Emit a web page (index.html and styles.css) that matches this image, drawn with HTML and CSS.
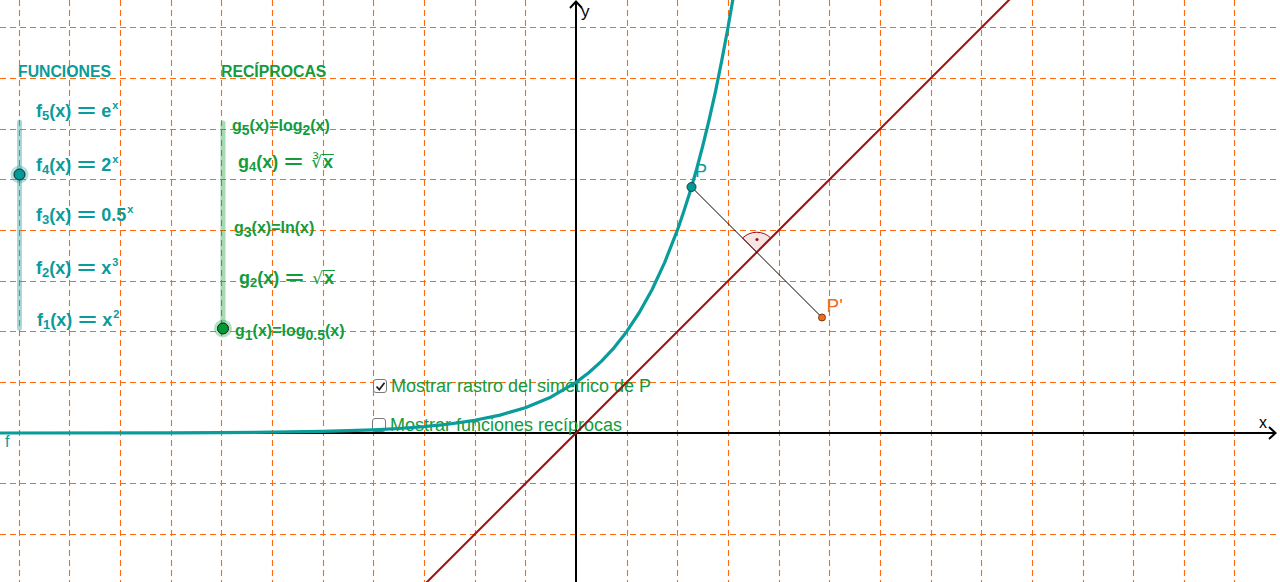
FILE: index.html
```html
<!DOCTYPE html>
<html lang="es">
<head>
<meta charset="utf-8">
<title>Funciones recíprocas</title>
<link rel="stylesheet" href="styles.css">
</head>
<body>
<div class="board">
  <svg class="layer grid" width="1280" height="582" viewBox="0 0 1280 582">
    <g class="gridlines">
      <line x1="19.5" y1="0" x2="19.5" y2="582"/>
      <line x1="69.5" y1="0" x2="69.5" y2="582"/>
      <line x1="120.5" y1="0" x2="120.5" y2="582"/>
      <line x1="171.5" y1="0" x2="171.5" y2="582"/>
      <line x1="221.5" y1="0" x2="221.5" y2="582"/>
      <line x1="272.5" y1="0" x2="272.5" y2="582"/>
      <line x1="323.5" y1="0" x2="323.5" y2="582"/>
      <line x1="373.5" y1="0" x2="373.5" y2="582"/>
      <line x1="424.5" y1="0" x2="424.5" y2="582"/>
      <line x1="475.5" y1="0" x2="475.5" y2="582"/>
      <line x1="525.5" y1="0" x2="525.5" y2="582"/>
      <line x1="627.5" y1="0" x2="627.5" y2="582"/>
      <line x1="677.5" y1="0" x2="677.5" y2="582"/>
      <line x1="728.5" y1="0" x2="728.5" y2="582"/>
      <line x1="779.5" y1="0" x2="779.5" y2="582"/>
      <line x1="829.5" y1="0" x2="829.5" y2="582"/>
      <line x1="880.5" y1="0" x2="880.5" y2="582"/>
      <line x1="931.5" y1="0" x2="931.5" y2="582"/>
      <line x1="981.5" y1="0" x2="981.5" y2="582"/>
      <line x1="1032.5" y1="0" x2="1032.5" y2="582"/>
      <line x1="1083.5" y1="0" x2="1083.5" y2="582"/>
      <line x1="1133.5" y1="0" x2="1133.5" y2="582"/>
      <line x1="1184.5" y1="0" x2="1184.5" y2="582"/>
      <line x1="1234.5" y1="0" x2="1234.5" y2="582"/>
      <line x1="0" y1="27.5" x2="1280" y2="27.5"/>
      <line x1="0" y1="78.5" x2="1280" y2="78.5"/>
      <line x1="0" y1="129.5" x2="1280" y2="129.5"/>
      <line x1="0" y1="179.5" x2="1280" y2="179.5"/>
      <line x1="0" y1="230.5" x2="1280" y2="230.5"/>
      <line x1="0" y1="281.5" x2="1280" y2="281.5"/>
      <line x1="0" y1="331.5" x2="1280" y2="331.5"/>
      <line x1="0" y1="382.5" x2="1280" y2="382.5"/>
      <line x1="0" y1="483.5" x2="1280" y2="483.5"/>
      <line x1="0" y1="534.5" x2="1280" y2="534.5"/>
    </g>
    <g class="axes">
      <line x1="0" y1="433" x2="1276" y2="433"/>
      <polyline points="1269,427 1275.5,433 1269,439"/>
      <line x1="576" y1="582" x2="576" y2="1.5"/>
      <polyline points="570,8 576,1.5 582,8"/>
    </g>
  </svg>

  <div class="lbl head teal h-fun">FUNCIONES</div>
  <div class="lbl head green h-rec">RECÍPROCAS</div>

  <div class="lbl fx teal f5">f<span class="sub">5</span>(x)<span class="eq">=</span>e<span class="sup">x</span></div>
  <div class="lbl fx teal f4">f<span class="sub">4</span>(x)<span class="eq">=</span>2<span class="sup">x</span></div>
  <div class="lbl fx teal f3">f<span class="sub">3</span>(x)<span class="eq">=</span>0.5<span class="sup">x</span></div>
  <div class="lbl fx teal f2">f<span class="sub">2</span>(x)<span class="eq">=</span>x<span class="sup">3</span></div>
  <div class="lbl fx teal f1">f<span class="sub">1</span>(x)<span class="eq">=</span>x<span class="sup">2</span></div>

  <div class="lbl gx green g5">g<span class="gsub">5</span>(x)=log<span class="gsub">2</span>(x)</div>
  <div class="lbl fx green g4">g<span class="sub">4</span>(x)<span class="eq">=</span><span class="root"><span class="rad">∛</span><span class="rc">x</span></span></div>
  <div class="lbl gx green g3">g<span class="gsub">3</span>(x)=ln(x)</div>
  <div class="lbl fx green g2">g<span class="sub">2</span>(x)<span class="eq">=</span><span class="root"><span class="rad">√</span><span class="rc">x</span></span></div>
  <div class="lbl gx green g1">g<span class="gsub">1</span>(x)=log<span class="gsub">0.5</span>(x)</div>

  <div class="lbl cb-row row1">
    <span class="box"><svg width="11" height="11" viewBox="0 0 11 11"><polyline points="1.5,5.5 4.3,8.5 9.5,1.8"/></svg></span>
    <span class="cb-text">Mostrar rastro del simétrico de P</span>
  </div>
  <div class="lbl cb-row row2">
    <span class="box"></span>
    <span class="cb-text">Mostrar funciones recíprocas</span>
  </div>

  <div class="lbl axis-lbl ylbl">y</div>
  <div class="lbl axis-lbl xlbl">x</div>
  <div class="lbl flbl teal">f</div>
  <div class="lbl plbl teal">P</div>
  <div class="lbl pplbl">P'</div>

  <svg class="layer plot" width="1280" height="582" viewBox="0 0 1280 582">
    <line class="slider-track teal-track" x1="19.5" y1="122" x2="19.5" y2="328"/>
    <circle class="halo teal-halo" cx="19.5" cy="174.5" r="9"/>
    <circle class="knob teal-knob" cx="19.5" cy="174.5" r="5.5"/>

    <line class="slider-track green-track" x1="223" y1="123" x2="223" y2="328"/>
    <circle class="halo green-halo" cx="223" cy="328.5" r="9"/>
    <circle class="knob green-knob" cx="223" cy="328.5" r="5.5"/>

    <line class="bisector" x1="416" y1="593" x2="1016" y2="-7"/>
    <polyline class="curve" points="0,433 170.8,432.8 221.45,432.6 272.1,432.2 322.75,431.4 373.4,429.8 398.7,428.5 424.05,426.7 449.4,424 474.7,420.3 500,415.1 525.35,407.7 550.7,397.2 576,382.35 588.7,372.8 601.3,361.4 614,347.8 626.65,331.7 639.3,312.5 652,289.75 664.6,262.6 677.3,230.4 683.6,212.1 690,192.1 696.3,170.3 702.6,146.5 708.95,120.5 715.3,92.3 721.6,61.4 727.95,27.8 733,-1.3 735.5,-16.6"/>
    <line class="seg" x1="691.5" y1="187" x2="822" y2="317.5"/>
    <path class="angle" d="M756.75,252.25 L742.6,238.1 A20,20 0 0 1 770.9,238.1 Z"/>
    <circle class="angle-dot" cx="757" cy="239.5" r="1.6"/>
    <circle class="pt-p" cx="691.5" cy="187" r="4.5"/>
    <circle class="pt-pp" cx="822" cy="317.5" r="3.5"/>
  </svg>
</div>
</body>
</html>
```

FILE: styles.css
```css
html, body {
  margin: 0;
  padding: 0;
  background: #ffffff;
}

.board {
  position: relative;
  width: 1280px;
  height: 582px;
  overflow: hidden;
  background: #ffffff;
  font-family: "Liberation Sans", Arial, sans-serif;
}

.layer {
  position: absolute;
  left: 0;
  top: 0;
  display: block;
}

.plot {
  pointer-events: none;
}

.gridlines line {
  stroke: #ff6a10;
  stroke-width: 1.1;
  stroke-dasharray: 6 4;
}

.axes line,
.axes polyline {
  stroke: #000000;
  stroke-width: 2;
  fill: none;
}

.teal { color: #0a9b9b; }
.green { color: #139b3c; }

.lbl {
  position: absolute;
  white-space: nowrap;
  line-height: 1;
}

.head {
  font-weight: bold;
  font-size: 15.8px;
  top: 64px;
}
.h-fun { left: 18px; }
.h-rec { left: 221px; }

/* math-style formulas */
.fx {
  font-weight: bold;
  font-size: 18px;
}
.sub {
  font-size: 13px;
  position: relative;
  top: 3px;
}
.sup {
  font-size: 11px;
  position: relative;
  top: -8px;
  margin-left: 1px;
}
.eq {
  display: inline-block;
  width: 21px;
  margin: 0 4px 0 5px;
  text-align: center;
  transform: scaleX(1.8);
}

.f5 { left: 36px; top: 101.5px; }
.f4 { left: 36px; top: 155.5px; }
.f3 { left: 36px; top: 205.5px; }
.f2 { left: 36px; top: 259px; }
.f1 { left: 37px; top: 310.5px; }

.g4 { left: 238px; top: 153px; }
.g2 { left: 239px; top: 269px; }

/* text-style formulas */
.gx {
  font-weight: bold;
  font-size: 16px;
}
.gsub {
  font-size: 14px;
  position: relative;
  top: 4px;
}
.g5 { left: 232px; top: 118px; }
.g3 { left: 234px; top: 219.5px; }
.g1 { left: 235px; top: 322.5px; }

.root {
  display: inline-block;
  margin-left: 3px;
}
.rad {
  font-family: "DejaVu Sans", sans-serif;
  font-weight: normal;
  font-size: 17px;
}
.rc {
  display: inline-block;
  border-top: 1.5px solid currentColor;
  padding: 0 1px;
  line-height: 15px;
}

/* checkboxes */
.cb-row {
  display: flex;
  align-items: center;
  gap: 4px;
  color: #139b3c;
  font-size: 18px;
}
.row1 { left: 373px; top: 377px; }
.row2 { left: 372px; top: 416px; }

.box {
  box-sizing: border-box;
  width: 14px;
  height: 14px;
  border: 1.5px solid #7a7a7a;
  border-radius: 3px;
  background: #ffffff;
  display: flex;
  align-items: center;
  justify-content: center;
}
.box svg polyline {
  fill: none;
  stroke: #222222;
  stroke-width: 1.8;
}
.cb-text {
  line-height: 18px;
}

.axis-lbl {
  color: #000000;
  font-size: 17px;
}
.ylbl { left: 581px; top: 2.5px; }
.xlbl { left: 1259px; top: 414.5px; font-size: 16px; }

.flbl { left: 5px; top: 433.5px; font-size: 16px; }
.plbl { left: 695px; top: 161.5px; font-size: 18px; }
.pplbl { left: 826.5px; top: 295.5px; font-size: 19px; color: #f26b1d; }

/* plot elements */
.slider-track {
  stroke-width: 5;
  stroke-linecap: round;
}
.teal-track { stroke: rgba(0, 153, 153, 0.35); }
.green-track { stroke: rgba(0, 153, 51, 0.35); }
.teal-halo { fill: rgba(0, 153, 153, 0.3); }
.green-halo { fill: rgba(0, 153, 51, 0.3); }
.knob {
  stroke: #1a1a1a;
  stroke-width: 1;
}
.teal-knob { fill: #009999; }
.green-knob { fill: #009933; }

.bisector {
  stroke: #a01010;
  stroke-width: 2;
}
.curve {
  fill: none;
  stroke: #0a9b9b;
  stroke-width: 3.2;
  stroke-linejoin: round;
}
.seg {
  stroke: #000000;
  stroke-width: 1;
}
.angle {
  fill: rgba(153, 0, 0, 0.1);
  stroke: #a01010;
  stroke-width: 1;
}
.angle-dot { fill: #a01010; }
.pt-p {
  fill: #009999;
  stroke: #1f3f3f;
  stroke-width: 1;
}
.pt-pp {
  fill: #f26b1d;
  stroke: #7a3a10;
  stroke-width: 1;
}
```
